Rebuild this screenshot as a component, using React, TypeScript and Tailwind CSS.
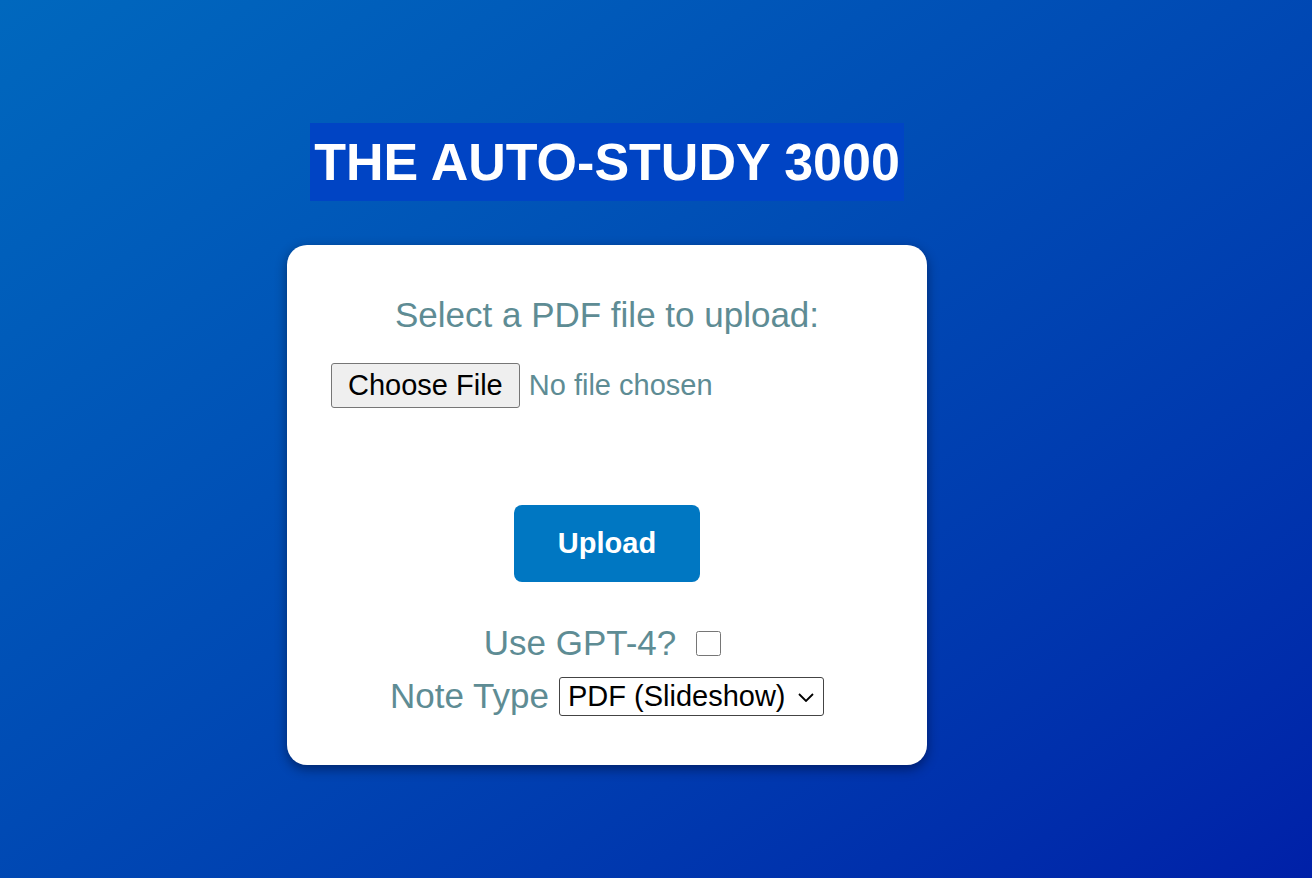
import React from "react";

const App = () => {
  return (
    <div className="min-h-screen w-full bg-linear-to-br from-[#0068be] to-[#0020a8] font-['Liberation_Sans',Arial,sans-serif]">
      <div className="w-[1214px] flex flex-col items-center pt-[123px] pb-[113px]">
        <h1 className="bg-[#0044c4] text-white font-bold text-[52px] leading-[60px] px-[4px] py-[9px]">
          THE AUTO-STUDY 3000
        </h1>
        <div className="mt-[44px] w-[640px] h-[520px] bg-white rounded-[20px] shadow-[0_4px_12px_rgba(0,0,20,0.45)] px-[44px] pt-[50px] text-[#5e8c94]">
          <p className="text-center text-[35px] leading-[40px]">Select a PDF file to upload:</p>
          <div className="mt-[28px]">
            <input
              type="file"
              accept="application/pdf"
              className="text-[29px] leading-[33px] text-[#5e8c94] file:mr-[9px] file:h-[45px] file:px-[16px] file:border file:border-[#767676] file:rounded-[3px] file:bg-[#efefef] file:text-black"
            />
          </div>
          <div className="mt-[97px] flex justify-center">
            <button className="w-[186px] h-[77px] rounded-[8px] bg-[#0077c2] text-white font-bold text-[29px]">
              Upload
            </button>
          </div>
          <div className="mt-[41px] flex items-center justify-center text-[35px] leading-[40px]">
            <span>Use GPT-4?</span>
            <input type="checkbox" className="ml-[20px] mr-[9px] w-[25px] h-[25px]" />
          </div>
          <div className="mt-[13px] flex items-center justify-center text-[35px] leading-[40px]">
            <span>Note Type</span>
            <div className="relative ml-[10px]">
              <select className="appearance-none block h-[39px] w-[265px] border border-[#444] rounded-[3px] text-black text-[29px] leading-[33px] pl-[8px] pr-[30px] bg-white">
                <option>PDF (Slideshow)</option>
                <option>Text</option>
              </select>
              <svg
                className="pointer-events-none absolute right-[10px] top-[16px]"
                width="16"
                height="9"
                viewBox="0 0 16 9"
                fill="none"
              >
                <path d="M1 1l7 7 7-7" stroke="#000" strokeWidth="1.8" />
              </svg>
            </div>
          </div>
        </div>
      </div>
    </div>
  );
};

export default App;
